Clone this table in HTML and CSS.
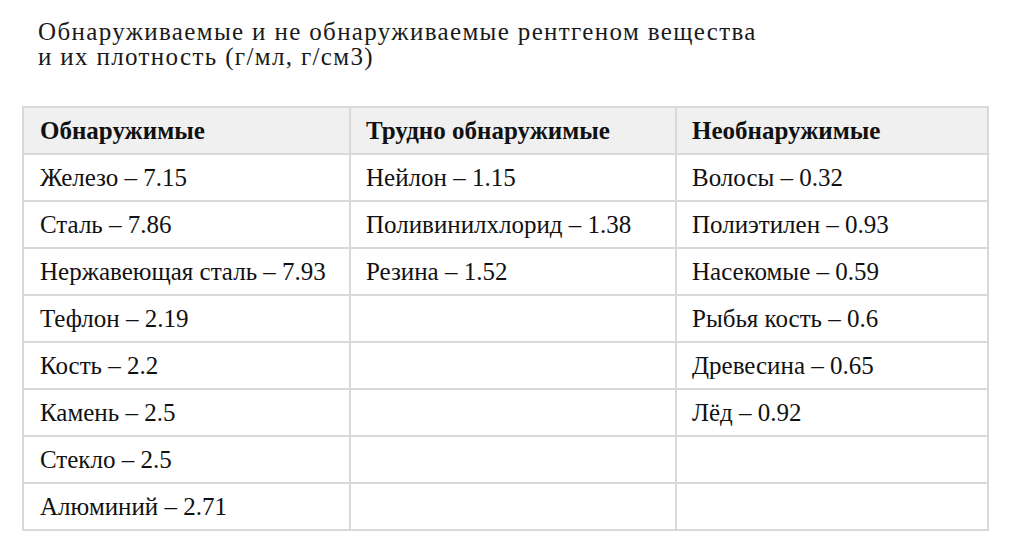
FILE: index.html
```html
<!DOCTYPE html>
<html lang="ru">
<head>
<meta charset="utf-8">
<link rel="stylesheet" href="styles.css">
</head>
<body>
<div class="page">
  <h1 class="title">Обнаруживаемые и не обнаруживаемые рентгеном вещества<br>и их плотность (г/мл, г/см3)</h1>
  <table class="grid">
    <colgroup><col class="c1"><col class="c2"><col class="c3"></colgroup>
    <thead>
      <tr><th>Обнаружимые</th><th>Трудно обнаружимые</th><th>Необнаружимые</th></tr>
    </thead>
    <tbody>
      <tr><td>Железо – 7.15</td><td>Нейлон – 1.15</td><td>Волосы – 0.32</td></tr>
      <tr><td>Сталь – 7.86</td><td>Поливинилхлорид – 1.38</td><td>Полиэтилен – 0.93</td></tr>
      <tr><td>Нержавеющая сталь – 7.93</td><td>Резина – 1.52</td><td>Насекомые – 0.59</td></tr>
      <tr><td>Тефлон – 2.19</td><td></td><td>Рыбья кость – 0.6</td></tr>
      <tr><td>Кость – 2.2</td><td></td><td>Древесина – 0.65</td></tr>
      <tr><td>Камень – 2.5</td><td></td><td>Лёд – 0.92</td></tr>
      <tr><td>Стекло – 2.5</td><td></td><td></td></tr>
      <tr><td>Алюминий – 2.71</td><td></td><td></td></tr>
    </tbody>
  </table>
</div>
</body>
</html>
```
FILE: styles.css
```css
html, body {
  margin: 0;
  padding: 0;
  background: #ffffff;
}
.page {
  padding: 19px 0 0 22px;
  font-family: "Liberation Serif", "Times New Roman", serif;
  color: #111111;
}
.title {
  margin: 0 0 37px 16px;
  font-family: "Liberation Serif", "Times New Roman", serif;
  font-weight: normal;
  font-size: 25px;
  line-height: 25px;
  letter-spacing: 1.35px;
  color: #1a1a1a;
}
.grid {
  border-collapse: collapse;
  width: 965px;
  table-layout: fixed;
  font-family: "Liberation Serif", "Times New Roman", serif;
  font-size: 25px;
}
.c1 { width: 327px; }
.c2 { width: 326px; }
.c3 { width: 312px; }
.grid th, .grid td {
  border: 2px solid #d9d9d9;
  height: 45px;
  padding: 0 0 0 16px;
  text-align: left;
  vertical-align: middle;
  white-space: nowrap;
  font-family: "Liberation Serif", "Times New Roman", serif;
}
.grid th {
  background: #f0f0f0;
  font-weight: bold;
  font-size: 25px;
}
.grid th + th, .grid td + td {
  padding-left: 15px;
}
```
